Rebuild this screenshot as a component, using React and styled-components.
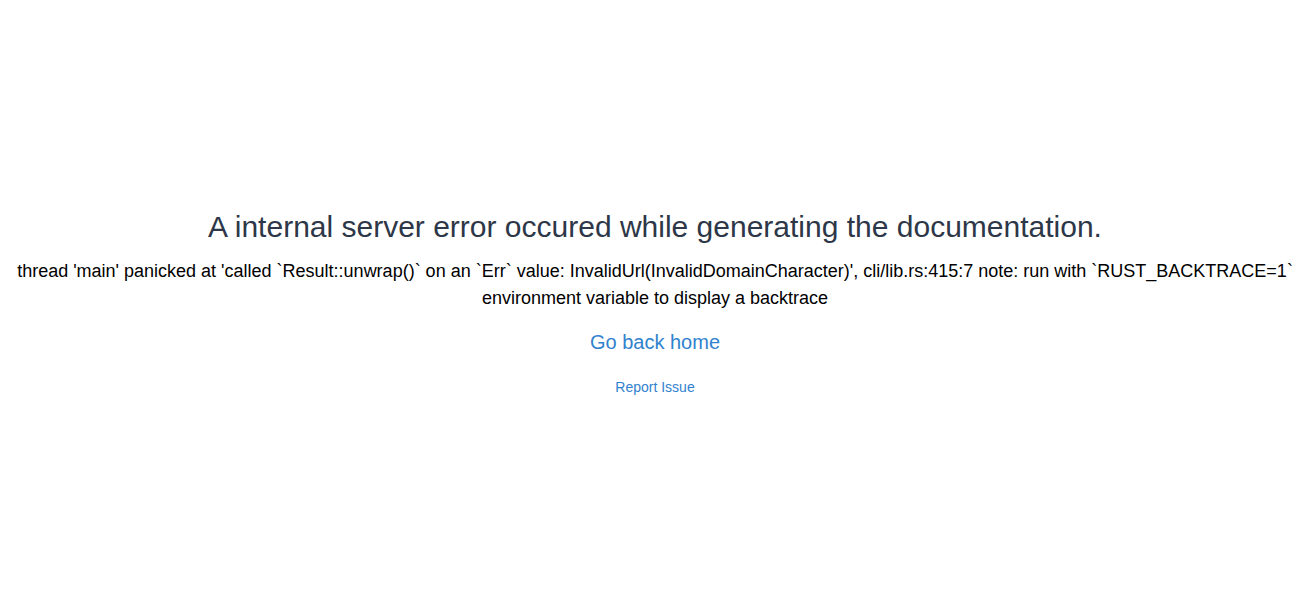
import React from 'react';
import styled, { createGlobalStyle } from 'styled-components';

const GlobalStyle = createGlobalStyle`
  html, body {
    margin: 0;
    padding: 0;
    background: #fff;
  }
  body {
    font-family: 'Liberation Sans', Arial, sans-serif;
  }
`;

const Page = styled.main`
  min-height: 100vh;
  display: flex;
  flex-direction: column;
  align-items: center;
  justify-content: center;
  text-align: center;
  padding: 16px 4px 0 16px;
  box-sizing: border-box;
`;

const Title = styled.h1`
  font-size: 30px;
  font-weight: normal;
  line-height: 37px;
  color: #2d3748;
  margin: 0 0 13px 0;
`;

const Message = styled.p`
  font-size: 18px;
  line-height: 27px;
  color: #000;
  margin: 0 0 16px 0;
`;

const HomeLink = styled.a`
  font-size: 20px;
  line-height: 28px;
  color: #3182ce;
  text-decoration: none;
  margin-bottom: 21px;
`;

const ReportLink = styled.a`
  font-size: 14px;
  line-height: 20px;
  color: #3182ce;
  text-decoration: none;
`;

export default function App() {
  return (
    <>
      <GlobalStyle />
      <Page>
        <Title>A internal server error occured while generating the documentation.</Title>
        <Message>
          thread 'main' panicked at 'called `Result::unwrap()` on an `Err` value:
          InvalidUrl(InvalidDomainCharacter)', cli/lib.rs:415:7 note: run with
          `RUST_BACKTRACE=1` environment variable to display a backtrace
        </Message>
        <HomeLink href="#home">Go back home</HomeLink>
        <ReportLink href="#report">Report Issue</ReportLink>
      </Page>
    </>
  );
}
